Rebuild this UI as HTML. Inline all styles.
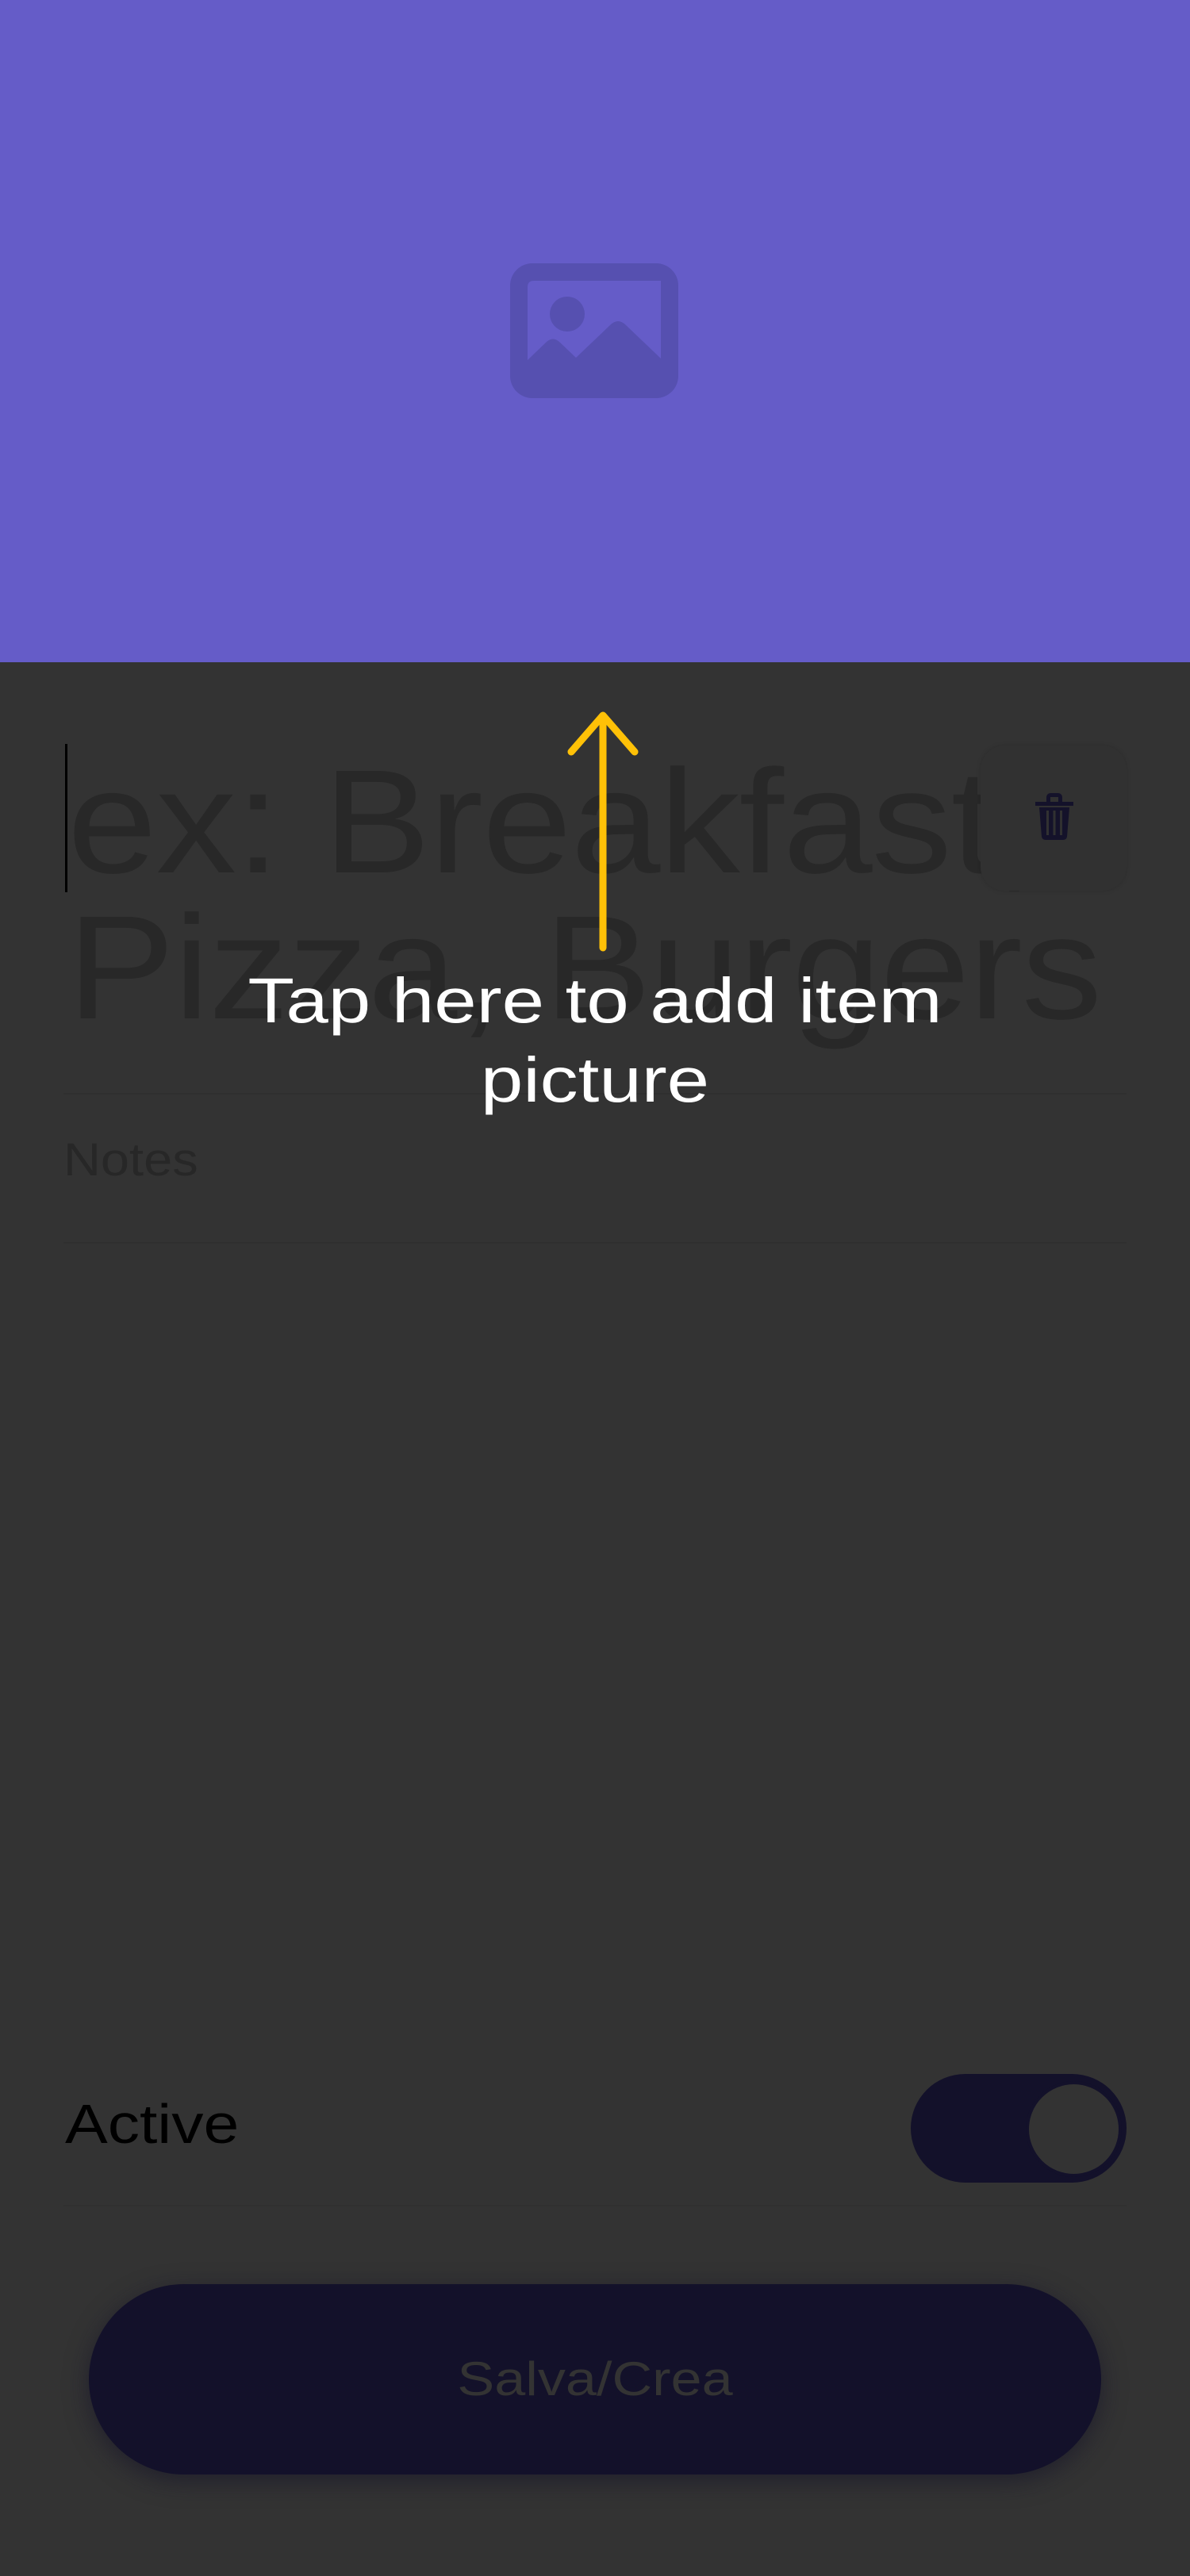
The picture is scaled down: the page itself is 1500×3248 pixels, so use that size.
<!DOCTYPE html>
<html><head><meta charset="utf-8"><style>
html,body{margin:0;padding:0}
body{width:1500px;height:3248px;background:#333333;position:relative;overflow:hidden;font-family:"Liberation Sans",sans-serif}
.top{position:absolute;left:0;top:0;width:1500px;height:835px;background:#655CC8}
.abs{position:absolute}
.title{left:85px;top:945px;width:1420px;font-size:186px;line-height:184px;color:#282828;letter-spacing:-1px;white-space:nowrap;transform:scaleX(1.09);transform-origin:0 0}
</style></head><body>
<div class="top"></div>
<svg class="abs" style="left:643px;top:332px" width="212" height="170" viewBox="0 0 212 170">
<path fill="#5650B0" fill-rule="evenodd" d="M28 0H184A28 28 0 0 1 212 28V142A28 28 0 0 1 184 170H28A28 28 0 0 1 0 142V28A28 28 0 0 1 28 0ZM30 22H190V120L146 78Q136 68 126 78L83 119L62 99Q54 92 46 99L22 122V30Q22 22 30 22Z"/>
<circle cx="72" cy="64" r="22" fill="#5650B0"/>
</svg>
<div class="abs title">ex: Breakfast,<br>Pizza, Burgers</div>
<div class="abs" style="left:82px;top:938px;width:3px;height:187px;background:#000"></div>
<div class="abs" style="left:1236px;top:940px;width:184px;height:183px;border-radius:30px;background:#313131;box-shadow:0 0 6px rgba(0,0,0,0.15)"></div>
<svg class="abs" style="left:1303px;top:1000px" width="52" height="60" viewBox="0 0 52 60">
<path fill="#14122A" d="M16 6Q16 0 22 0H30Q36 0 36 6V11H50V16H2V11H16ZM21 5V11H31V5Z"/>
<path fill="#14122A" d="M7 18H45L42 55Q41 59 37 59H15Q11 59 10 55ZM16 22V53H19V22ZM24.5 22V53H27.5V22ZM33 22V53H36V22Z"/>
</svg>
<div class="abs" style="left:80px;top:1378px;width:1340px;height:2px;background:#2f2f2f"></div>
<div class="abs" style="left:80px;top:1428px;font-size:58px;line-height:70px;color:#272727;transform:scaleX(1.12);transform-origin:0 0">Notes</div>
<div class="abs" style="left:80px;top:1566px;width:1340px;height:2px;background:#2f2f2f"></div>
<svg class="abs" style="left:700px;top:890px" width="120" height="320" viewBox="0 0 120 320">
<path d="M60 15V305M20 58L60 12L100 58" stroke="#FFC107" stroke-width="9" fill="none" stroke-linecap="round" stroke-linejoin="round"/>
</svg>
<div class="abs" style="left:0;top:1212px;width:1500px;text-align:center;color:#fff;font-size:80px;line-height:100px;transform:scaleX(1.2);transform-origin:750px 0">Tap here to add item<br>picture</div>
<div class="abs" style="left:82px;top:2638px;font-size:70px;line-height:80px;color:#000;transform:scaleX(1.15);transform-origin:0 0">Active</div>
<div class="abs" style="left:1148px;top:2615px;width:272px;height:137px;border-radius:69px;background:#13112A"></div>
<div class="abs" style="left:1293px;top:2624px;width:113px;height:113px;border-radius:50%;background:#333;border:4px solid #13112A"></div>
<div class="abs" style="left:80px;top:2780px;width:1340px;height:2px;background:#303030"></div>
<div class="abs" style="left:112px;top:2880px;width:1276px;height:240px;border-radius:120px;background:#13112A;box-shadow:0 8px 30px rgba(20,18,40,0.6)"></div>
<div class="abs" style="left:112px;top:2880px;width:1276px;height:240px;text-align:center;line-height:240px;font-size:60px;color:#333;transform:scaleX(1.17);transform-origin:638px 0">Salva/Crea</div>
</body></html>
